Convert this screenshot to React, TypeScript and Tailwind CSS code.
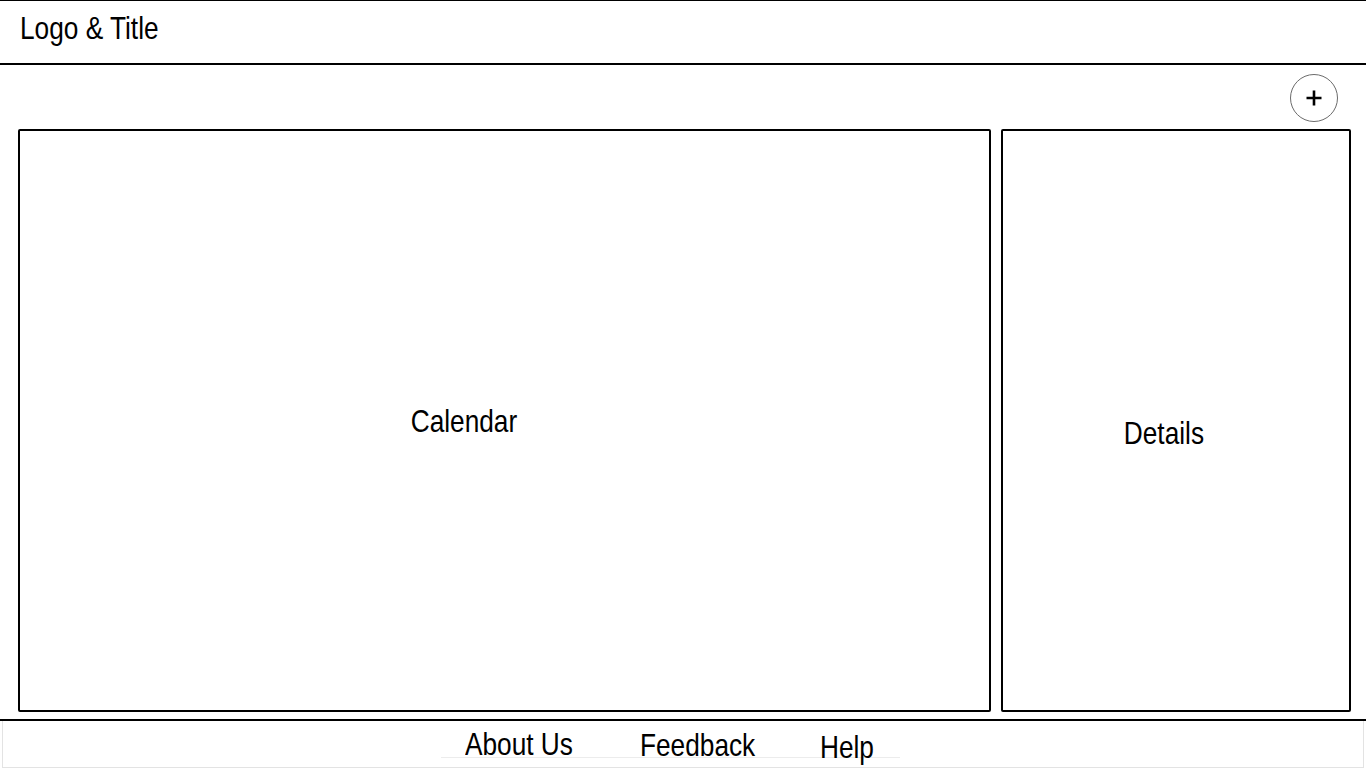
import React from "react";

const sans = "font-['Liberation_Sans','Arial',sans-serif]";
// Arial Narrow look: Liberation Sans squeezed horizontally
const narrow = "inline-block whitespace-nowrap scale-x-[0.82]";

function PlusButton() {
  return (
    <button
      type="button"
      className="flex h-[48px] w-[48px] items-center justify-center rounded-full border border-[#6b6b6b] bg-white"
      aria-label="Add"
    >
      <svg width="16" height="16" viewBox="0 0 16 16" fill="none" stroke="#000" strokeWidth={2.6} strokeLinecap="butt">
        <path d="M8 0.5v15M0.5 8h15" />
      </svg>
    </button>
  );
}

export default function App() {
  return (
    <div className={`h-[768px] w-[1366px] overflow-hidden bg-white text-black ${sans}`}>
      {/* header */}
      <header className="h-[65px] border-t border-b-2 border-black pl-[20px] pt-[11px]">
        <h1 className="text-[32px] leading-[32px] font-normal">
          <span className={`${narrow} origin-left`}>Logo &amp; Title</span>
        </h1>
      </header>

      {/* main */}
      <main>
        <div className="flex justify-end pr-[28px] pt-[9px]">
          <PlusButton />
        </div>
        <div className="mt-[7px] flex gap-[10px] pl-[18px]">
          <section className="flex h-[583px] w-[973px] items-center justify-center rounded-[2px] border-2 border-black pr-[81px]">
            <span className={`${narrow} text-[32px] leading-[32px]`}>Calendar</span>
          </section>
          <aside className="flex h-[583px] w-[350px] items-center justify-center rounded-[2px] border-2 border-black pr-[25px] pt-[25px]">
            <span className={`${narrow} text-[32px] leading-[32px]`}>Details</span>
          </aside>
        </div>
      </main>

      {/* footer */}
      <footer className="mt-[7px] border-t-2 border-black">
        <div className="mx-[2px] h-[47px] border-x border-b border-[#e3e3e3] pl-[438px]">
          <nav className="flex h-[37px] w-[459px] items-start border-b border-[#ececec] pl-[24px] pt-[7px] text-[32px] leading-[32px]">
            <a href="#" className="w-[175px] shrink-0">
              <span className={`${narrow} origin-left`}>About Us</span>
            </a>
            <a href="#" className="mt-[1px] w-[180px] shrink-0">
              <span className={`${narrow} origin-left`}>Feedback</span>
            </a>
            <a href="#" className="mt-[3px] shrink-0">
              <span className={`${narrow} origin-left`}>Help</span>
            </a>
          </nav>
        </div>
      </footer>
    </div>
  );
}
